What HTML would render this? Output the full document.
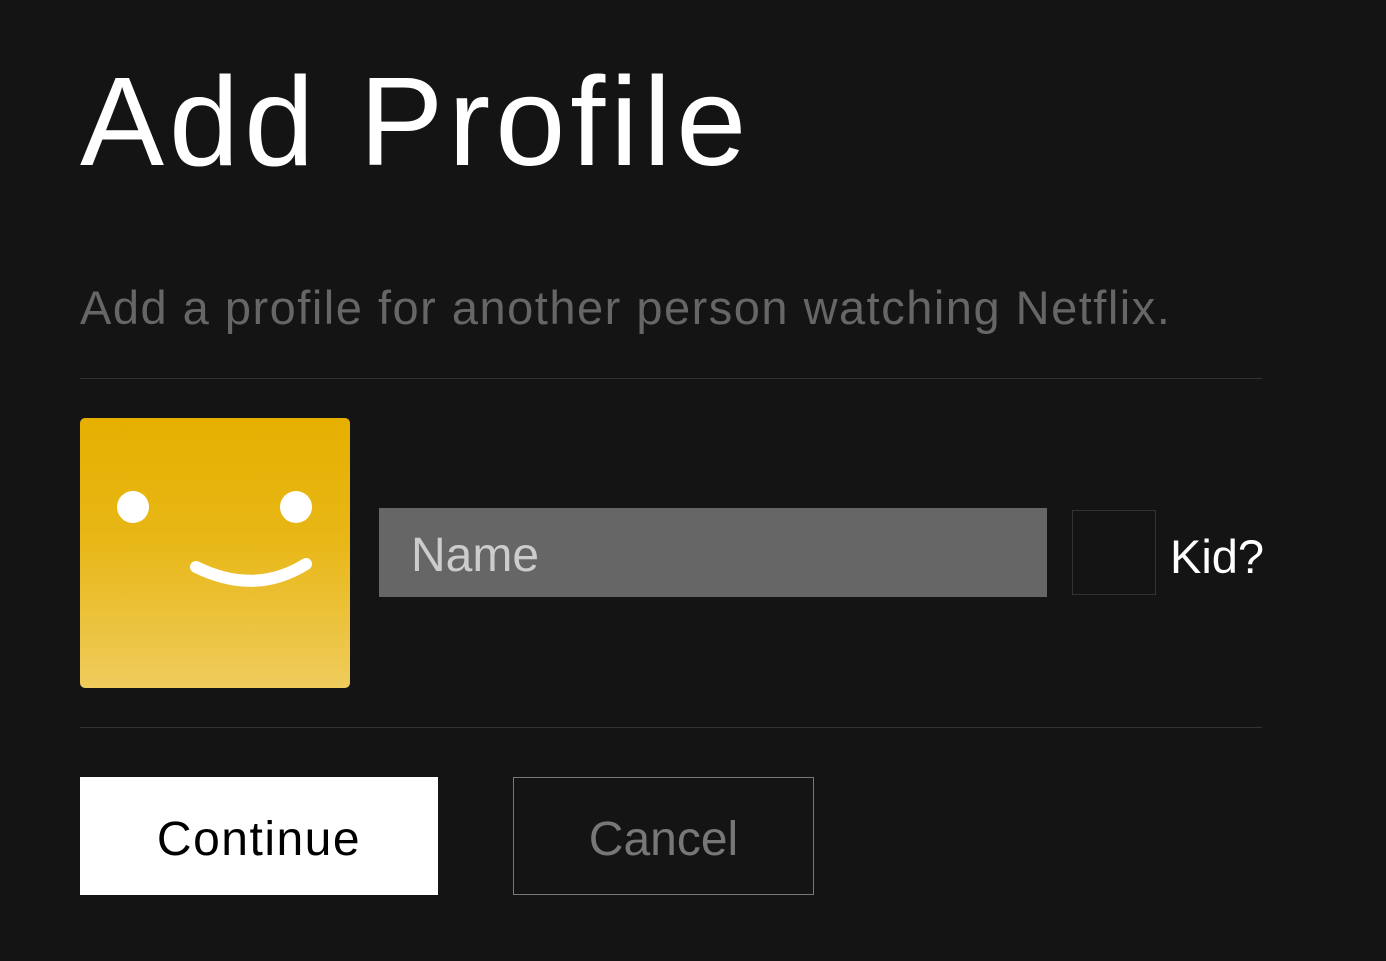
<!DOCTYPE html>
<html><head><meta charset="utf-8"><style>
html,body{margin:0;padding:0;background:#141414;width:1386px;height:961px;overflow:hidden;font-family:"Liberation Sans",sans-serif}
.abs{position:absolute}
h1{position:absolute;left:80px;top:42px;margin:0;font-weight:normal;color:#fff;font-size:126px;line-height:160px;letter-spacing:5px;white-space:nowrap}
.sub{left:80px;top:278px;color:#666;font-size:47px;line-height:60px;white-space:nowrap;letter-spacing:1.5px}
.line{left:80px;width:1182px;height:1px;background:#333}
.av{left:80px;top:418px;width:270px;height:270px;border-radius:5px;background:linear-gradient(#e6b000 0%,#e8b716 45%,#efcc5c 100%);overflow:hidden}
.name{left:379px;top:508px;width:668px;height:89px;background:#666;color:#ccc;font-size:48px;line-height:95px;box-sizing:border-box;padding-left:32px}
.cb{left:1072px;top:510px;width:84px;height:85px;border:1px solid #333;box-sizing:border-box}
.kid{left:1170px;top:525px;color:#fff;font-size:47px;line-height:64px}
.btn{top:777px;height:118px;box-sizing:border-box;font-size:48px;line-height:126px;text-align:center}
.cont{left:80px;width:358px;background:#fff;color:#000;letter-spacing:1.5px}
.canc{left:513px;width:301px;border:1px solid #777;color:#777;line-height:124px}
</style></head><body>
<h1>Add Profile</h1>
<div class="abs sub">Add a profile for another person watching Netflix.</div>
<div class="abs line" style="top:378px"></div>
<div class="abs av"><svg width="270" height="270" viewBox="0 0 270 270">
<circle cx="53" cy="89" r="16" fill="#fff"/><circle cx="216" cy="89" r="16" fill="#fff"/>
<path d="M116 149 Q175 178 226 146" stroke="#fff" stroke-width="12" fill="none" stroke-linecap="round"/>
</svg></div>
<div class="abs name">Name</div>
<div class="abs cb"></div>
<div class="abs kid">Kid?</div>
<div class="abs line" style="top:727px"></div>
<div class="abs btn cont">Continue</div>
<div class="abs btn canc">Cancel</div>
</body></html>
